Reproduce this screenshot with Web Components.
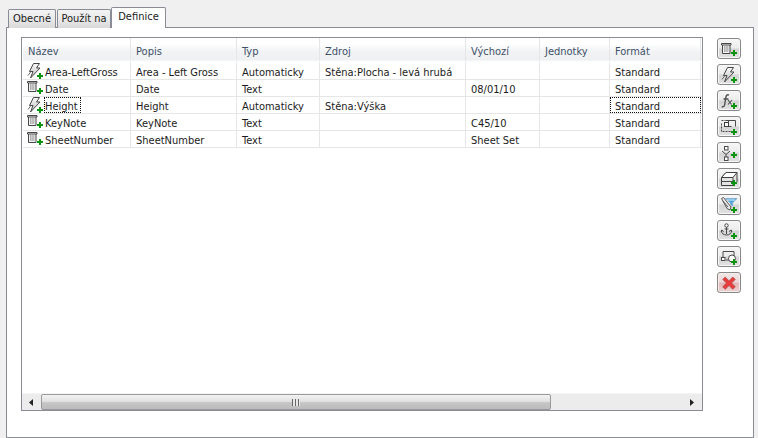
<!DOCTYPE html>
<html><head><meta charset="utf-8">
<style>
html,body{margin:0;height:100%;overflow:hidden;background:#f0f0f0}
body{font:11px "DejaVu Sans",Verdana,sans-serif;font-stretch:condensed;color:#1c1c1c}
</style></head><body>
<x-dialog>
  <x-tabs slot="tabs">
    <x-tab w="48">Obecné</x-tab>
    <x-tab w="54">Použít na</x-tab>
    <x-tab w="54" active>Definice</x-tab>
  </x-tabs>
  <x-grid>
    <x-row header><x-cell>Název</x-cell><x-cell>Popis</x-cell><x-cell>Typ</x-cell><x-cell>Zdroj</x-cell><x-cell>Výchozí</x-cell><x-cell>Jednotky</x-cell><x-cell>Formát</x-cell></x-row>
    <x-row first><x-cell><x-name icon="bolt">Area-LeftGross</x-name></x-cell><x-cell>Area - Left Gross</x-cell><x-cell>Automaticky</x-cell><x-cell>Stěna:Plocha - levá hrubá</x-cell><x-cell></x-cell><x-cell></x-cell><x-cell>Standard</x-cell></x-row>
    <x-row><x-cell><x-name icon="table">Date</x-name></x-cell><x-cell>Date</x-cell><x-cell>Text</x-cell><x-cell></x-cell><x-cell>08/01/10</x-cell><x-cell></x-cell><x-cell>Standard</x-cell></x-row>
    <x-row><x-cell><x-name icon="bolt" focused>Height</x-name></x-cell><x-cell>Height</x-cell><x-cell>Automaticky</x-cell><x-cell>Stěna:Výška</x-cell><x-cell></x-cell><x-cell></x-cell><x-cell focused>Standard</x-cell></x-row>
    <x-row><x-cell><x-name icon="table">KeyNote</x-name></x-cell><x-cell>KeyNote</x-cell><x-cell>Text</x-cell><x-cell></x-cell><x-cell>C45/10</x-cell><x-cell></x-cell><x-cell>Standard</x-cell></x-row>
    <x-row><x-cell><x-name icon="table">SheetNumber</x-name></x-cell><x-cell>SheetNumber</x-cell><x-cell>Text</x-cell><x-cell></x-cell><x-cell>Sheet Set</x-cell><x-cell></x-cell><x-cell>Standard</x-cell></x-row>
    <x-hscroll slot="scroll"></x-hscroll>
  </x-grid>
  <x-toolbar slot="tools">
    <x-tool icon="table"></x-tool><x-tool icon="bolt"></x-tool><x-tool icon="fx"></x-tool><x-tool icon="frame"></x-tool><x-tool icon="tree"></x-tool><x-tool icon="box"></x-tool><x-tool icon="funnel"></x-tool><x-tool icon="anchor"></x-tool><x-tool icon="link"></x-tool><x-tool icon="del" red></x-tool>
  </x-toolbar>
</x-dialog>
<script>
const plus=(x,y)=>`<path d="M${x+2} ${y}h2v2h2v2h-2v2h-2v-2h-2v-2h2z" fill="#0c9411"/>`;
const S='fill="none" stroke="#4a4a4a" stroke-width="1"';
const ICONS={
 table:`<path d="M.5 2.500h9.500v1.500h-1v8.500H1.500V4H.5z" fill="#f2f2f2" stroke="#474747"/><path d="M1.500 4h7.500" stroke="#474747"/><path d="M3 6h4.500M3 8h4.500M3 10h4.500" stroke="#6e6e6e" stroke-dasharray="1.200 .4"/>`+plus(10,9),
 bolt:`<path d="M6.500.5h6L9.500 5H13L3.500 15 6 8.500H2.500z" fill="url(#bg)" stroke="#454545" stroke-linejoin="round"/><path d="M1 12.500l3-4" stroke="#6a6a6a"/><defs><linearGradient id="bg" x1="0" y1="0" x2="0" y2="1"><stop offset="0" stop-color="#fafafa"/><stop offset="1" stop-color="#bdbdbd"/></linearGradient></defs>`+plus(10,10),
 fx:`<path d="M8 2.200C6.200 1.200 5.200 2.200 4.800 4.500L3.700 11.500C3.400 13.500 2.300 14.200 .8 13.500M2.500 6H7.500" fill="none" stroke="#4f4f4f" stroke-width="1.400"/><path d="M7 7l3.500 4.500M11 7l-4 4.500" stroke="#4f4f4f" stroke-width="1.100"/>`+plus(10,10),
 frame:`<path d="M.5 4.500v8h9" ${S} stroke-dasharray="2 1"/><path d="M4.500 1.500h10v6M4.500 7.500h6" ${S}/><path d="M.5 1.500h4M7.500 1.500v3" ${S} stroke-dasharray="2 1"/><rect x="3.500" y="3.500" width="4" height="4" fill="#fff" stroke="#3c3c3c"/>`+plus(10,10),
 tree:`<rect x="3.500" y="1.500" width="3.500" height="3.500" fill="#fff" stroke="#4a4a4a"/><rect x="3.500" y="12" width="3.500" height="3.500" fill="#fff" stroke="#4a4a4a"/><path d="M1 6l4 3.500L9 6M5 9.500V12" ${S}/>`+plus(10,7),
 box:`<path d="M.5 6.500L5 1.500h11v9l-3.500 4H.5z" fill="#e3e3e3" stroke="#3f3f3f"/><path d="M5 1.500h11L12 6.500H.5z" fill="#fff" stroke="#3f3f3f"/><path d="M12 6.500V14M.5 10.500H12" ${S}/>`+plus(10,9),
 funnel:`<path d="M4.500 1.500h11.500l-4.500 4.500v3l-2-2V6z" fill="#4ea6e0" stroke="#6f9cc0" stroke-width=".6"/><path d="M6 3h8" stroke="#dff1fb"/><path d="M.5 1.500l2-1 7.500 9.500-1 3-3-1.500zM2 4l5 6" fill="#e8e8e8" stroke="#5a5a5a"/>`+plus(10,10),
 anchor:`<circle cx="5.500" cy="2.500" r="1.700" fill="#fff" stroke="#444"/><path d="M5.500 4.200V11M3.500 6h4M.5 7.500c0 3 2 4.500 5 4.500s5-1.500 5-4.500M.2 9L.7 7l2 1.500M8 8.500L10.300 7l.5 2" ${S}/>`+plus(10,10),
 link:`<path d="M2 2.500h11v6M2 2.500V9M5 11h4" ${S}/><rect x=".5" y="8.500" width="3.500" height="3" fill="#fff" stroke="#4a4a4a"/><circle cx="11" cy="9.500" r="3.500" fill="#fff" stroke="#4a4a4a"/>`+plus(10,10),
 del:`<path d="M4.200 2L8 5.800 11.800 2 14.300 4.500 10.500 8l3.800 3.800-2.500 2.500L8 10.500 4.200 14.300 1.700 11.800 5.500 8 1.700 4.500z" fill="#ec3a3a" stroke="#a85656" stroke-width=".8"/>`
};
function reg(name,css,html,extra){
  const C=class extends HTMLElement{
    constructor(){super();this.attachShadow({mode:'open'}).innerHTML=`<style>${css}</style>${html}`}
    connectedCallback(){extra&&extra(this)}
  };
  customElements.define(name,C);
}
let uid=0;
function draw(svg,name){svg.innerHTML=(ICONS[name]||'').replace(/bg/g,'bg'+(++uid))}
reg('x-icon',':host{display:block;width:16px;height:16px;flex:none}svg{display:block;overflow:visible}','<svg width="16" height="16" viewBox="0 0 16 16"></svg>',
  e=>{if(e.getAttribute('name'))draw(e.shadowRoot.querySelector('svg'),e.getAttribute('name'))});
reg('x-dialog',`:host{display:flex;flex-direction:column;box-sizing:border-box;height:438px;padding:7px 4px 0 6px}
 .tabs{height:20px;padding-left:2px;position:relative;z-index:1}
 .panel{flex:1;display:flex;gap:14px;background:#fff;border:1px solid #898c95;padding:9px 0 26px 14px;min-height:0}
 .tools{padding-top:1px}`,
 `<div class="tabs"><slot name="tabs"></slot></div><div class="panel"><slot></slot><div class="tools"><slot name="tools"></slot></div></div>`);
reg('x-tabs',':host{display:flex;align-items:flex-end;height:21px}','<slot></slot>');
reg('x-tab',`:host{display:block;box-sizing:border-box;height:19px;margin-right:1px;border:1px solid #898c95;border-bottom:0;background:linear-gradient(#f3f3f3,#e9e9e9 50%,#d9d9d9);text-align:center;line-height:18px;color:#222;border-radius:2px 2px 0 0}
 :host([active]){height:21px;background:#fff;line-height:18px;margin-right:0;margin-left:-1px;position:relative}`,
 '<slot></slot>',e=>{e.style.width=(+e.getAttribute('w')+(e.hasAttribute('active')?1:0))+'px'});
reg('x-grid',`:host{display:flex;flex-direction:column;box-sizing:border-box;width:682px;height:374px;border:1px solid #898c95;background:#fff;--cols:108px 106px 83px 146px 74px 70px 91px}
 .rows{flex:1;padding-left:1px;min-height:0}`,
 '<div class="rows"><slot></slot></div><slot name="scroll"></slot>');
reg('x-row',`:host{display:grid;grid-template-columns:var(--cols);height:17px;box-sizing:border-box;border-bottom:1px solid #e6e6e6}
 :host([first]){height:18px}
 :host([header]){height:24px;color:#3f5169;background:linear-gradient(#fff 0,#fff 25%,#f1f3f5 55%,#eef0f2 90%,#fff);border-bottom:0}`,'<slot></slot>');
reg('x-cell',`:host{display:block;box-sizing:border-box;padding:0 5px;border-right:1px solid #e6e6e6;white-space:nowrap;overflow:hidden;line-height:19px;min-width:0;position:relative}
 :host-context(x-row[header]){line-height:28px;height:23px}
 :host-context(x-row[first]){line-height:21px}
 :host([focused]){outline:1px dotted #111;outline-offset:-1px}`,'<slot></slot>');
reg('x-name',`:host{display:flex;align-items:flex-start;height:16px;margin-left:-1px}
 x-icon{margin-top:-1px}
 :host([icon=bolt]) x-icon{margin-top:0}
 :host-context(x-row[first]) x-icon{margin-top:1px}
 span{display:block;box-sizing:border-box;line-height:19px;padding:0 1px;margin-left:1px}
 :host-context(x-row[first]) span{line-height:21px}
 :host([focused]) span{outline:1px dotted #111;outline-offset:-1px;width:37px;height:16px}`,
 `<x-icon></x-icon><span><slot></slot></span>`,e=>{draw(e.shadowRoot.querySelector('x-icon').shadowRoot.querySelector('svg'),e.getAttribute('icon'))});
reg('x-hscroll',`:host{display:flex;align-items:stretch;height:17px;background:#ececec;border-top:1px solid #f4f4f4;box-sizing:border-box}
 .b{width:19px;display:flex;align-items:center;justify-content:center;flex:none}
 .t{width:510px;flex:none;box-sizing:border-box;border:1px solid #9a9a9a;border-radius:2px;background:linear-gradient(#f2f2f2,#e2e2e2 45%,#c6c6c6 55%,#bcbcbc);display:flex;align-items:center;justify-content:center}
 .g{width:8px;height:7px;background:repeating-linear-gradient(90deg,#666 0 1px,#e8e8e8 1px 3px)}
 .s{flex:1}
 svg{display:block}`,
 `<div class="b"><svg width="5" height="7"><path d="M4 0v7L0 3.500z" fill="#222"/></svg></div><div class="t"><div class="g"></div></div><div class="s"></div><div class="b"><svg width="5" height="7"><path d="M0 0v7l4-3.500z" fill="#222"/></svg></div>`);
reg('x-toolbar',':host{display:flex;flex-direction:column;gap:5px;width:24px}','<slot></slot>');
reg('x-tool',`:host{display:flex;align-items:center;justify-content:center;box-sizing:border-box;width:24px;height:21px;border:1px solid #888;border-radius:3px;box-shadow:inset 0 0 0 1px #f7f7f7;background:linear-gradient(#f6f6f6,#ececec 45%,#d4d4d4 55%,#e2e2e2)}
 :host([red]){background:linear-gradient(#f2e8e8,#ecd8d8 45%,#e4b8b8 55%,#eed2d2);box-shadow:inset 0 0 0 1px #f7ecec}`,
 '<x-icon></x-icon>',e=>{draw(e.shadowRoot.querySelector('x-icon').shadowRoot.querySelector('svg'),e.getAttribute('icon'))});
</script>
</body></html>
